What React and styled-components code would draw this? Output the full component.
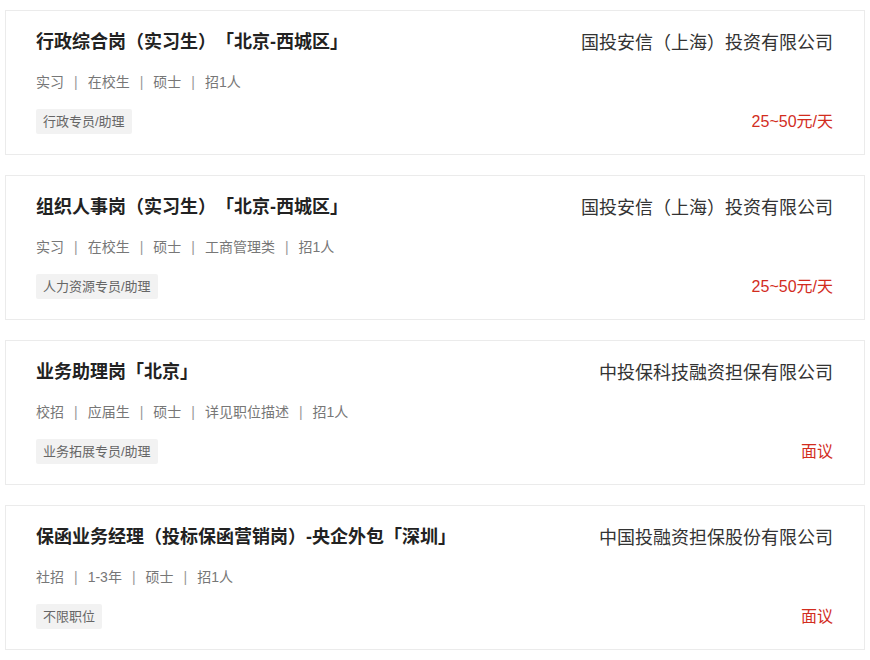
import React from "react";
import styled, { createGlobalStyle } from "styled-components";

const GlobalStyle = createGlobalStyle`
    body {
        margin: 0;
        background: #fff;
        font-family: "Liberation Sans", "Noto Sans CJK SC", sans-serif;
        text-spacing-trim: space-all;
    }
`

const List = styled.div`
    display: flex;
    flex-direction: column;
    gap: 20px;
    padding: 10px 5px 0 5px;
`
const Card = styled.div`
    display: flex;
    justify-content: space-between;
    height: 145px;
    box-sizing: border-box;
    border: 1px solid #ebebeb;
    padding: 19px 31px 19px 30px;
    background: #fff;
`
const Left = styled.div`
    display: flex;
    flex-direction: column;
    align-items: flex-start;
`
const Title = styled.div`
    font-size: 18px;
    line-height: 24px;
    font-weight: 600;
    color: #222;
`
const Meta = styled.div`
    margin-top: 18px;
    font-size: 14px;
    line-height: 20px;
    color: #777;
    display: flex;
`
const Sep = styled.span`
    margin: 0 10px;
    color: #999;
`
const Tag = styled.div`
    margin-top: 17px;
    height: 25px;
    line-height: 25px;
    padding: 0 7px;
    font-size: 13px;
    color: #666;
    background: #f2f2f2;
    border-radius: 2px;
`
const Right = styled.div`
    display: flex;
    flex-direction: column;
    justify-content: space-between;
    align-items: flex-end;
    padding: 1px 0 2px;
`
const Company = styled.div`
    font-size: 18px;
    line-height: 24px;
    color: #333;
`
const Salary = styled.div`
    font-size: 16px;
    line-height: 22px;
    color: #d22d1e;
`

const jobs = [
    {
        title: "行政综合岗（实习生）「北京-西城区」",
        meta: ["实习", "在校生", "硕士", "招1人"],
        tag: "行政专员/助理",
        company: "国投安信（上海）投资有限公司",
        salary: "25~50元/天",
    },
    {
        title: "组织人事岗（实习生）「北京-西城区」",
        meta: ["实习", "在校生", "硕士", "工商管理类", "招1人"],
        tag: "人力资源专员/助理",
        company: "国投安信（上海）投资有限公司",
        salary: "25~50元/天",
    },
    {
        title: "业务助理岗「北京」",
        meta: ["校招", "应届生", "硕士", "详见职位描述", "招1人"],
        tag: "业务拓展专员/助理",
        company: "中投保科技融资担保有限公司",
        salary: "面议",
    },
    {
        title: "保函业务经理（投标保函营销岗）-央企外包「深圳」",
        meta: ["社招", "1-3年", "硕士", "招1人"],
        tag: "不限职位",
        company: "中国投融资担保股份有限公司",
        salary: "面议",
    },
]

function JobCard({ job }) {
    return (
        <Card>
            <Left>
                <Title>{job.title}</Title>
                <Meta>
                    {job.meta.map((m, i) => (
                        <React.Fragment key={i}>
                            {i > 0 && <Sep>|</Sep>}
                            <span>{m}</span>
                        </React.Fragment>
                    ))}
                </Meta>
                <Tag>{job.tag}</Tag>
            </Left>
            <Right>
                <Company>{job.company}</Company>
                <Salary>{job.salary}</Salary>
            </Right>
        </Card>
    )
}

export default function App() {
    return (
        <>
            <GlobalStyle />
            <List>
                {jobs.map((job, i) => <JobCard key={i} job={job} />)}
            </List>
        </>
    )
}
